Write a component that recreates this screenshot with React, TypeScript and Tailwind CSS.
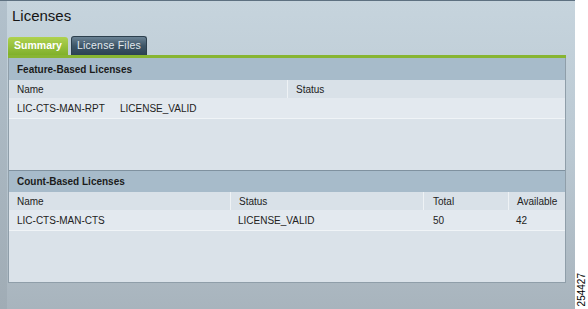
const featureRows = [{ name: 'LIC-CTS-MAN-RPT', status: 'LICENSE_VALID' }]

const countRows = [{ name: 'LIC-CTS-MAN-CTS', status: 'LICENSE_VALID', total: '50', available: '42' }]

function SectionHeader({ title, first }: { title: string; first?: boolean }) {
    return (
        <div
            className={`flex items-center pl-2 bg-[#a7bbca] text-[10px] font-bold text-[#1b1b1b] ${first ? 'h-[22px]' : 'h-[22px] border-t border-[#7f919f]'}`}
        >
            {title}
        </div>
    )
}

export default function App() {
    return (
        <div className="flex w-[588px] h-[309px] bg-white font-['Liberation_Sans',Arial,sans-serif] overflow-hidden">
            <div className="flex w-[575px] h-full border-t border-[#5e7181] bg-gradient-to-b from-[#c6d4dd] via-[#bac8d2] to-[#a8b4bd]">
                {/* left edge strip */}
                <div className="w-[7px] h-full bg-gradient-to-b from-[#b2c1cc] to-[#a0acb5]" />

                <div className="flex flex-col flex-1">
                    <h1 className="pt-[6px] pl-[5px] text-[15px] leading-[18px] text-[#151515]">Licenses</h1>

                    {/* Tabs */}
                    <div className="flex items-end gap-[3px] ml-px mt-[11px] h-[19px]">
                        <div className="flex items-center justify-center w-[60px] h-[18px] rounded-t-[3px] bg-gradient-to-b from-[#afd24f] to-[#80b02a] text-[10.5px] font-bold text-white">
                            Summary
                        </div>
                        <div className="flex items-center justify-center w-[76px] h-[19px] rounded-t-[3px] border border-b-0 border-[#2c3f4d] bg-gradient-to-b from-[#6a8294] via-[#3d5567] to-[#2c4253] text-[10.5px] tracking-[0.2px] text-[#e2e9ee]">
                            License Files
                        </div>
                    </div>
                    <div className="ml-px w-[558px] h-[3px] bg-[#88b532]" />

                    {/* Panel */}
                    <div className="ml-px w-[558px] border-x border-b border-[#8f9ea9] bg-[#dae2e9]">
                        {/* Feature-Based */}
                        <SectionHeader title="Feature-Based Licenses" first />
                        <div className="grid grid-cols-[278px_1fr] h-[18px] bg-[#d9e1e8] text-[10px] text-[#222]">
                            <div className="flex items-center pl-2">Name</div>
                            <div className="flex items-center pl-2 border-l border-[#eef2f5]">Status</div>
                        </div>
                        {featureRows.map((row, i) => (
                            <div
                                key={i}
                                className="grid grid-cols-[103px_1fr] h-[21px] bg-[#e3e9ef] border-b border-[#f0f4f7] text-[10px] text-[#222]"
                            >
                                <div className="flex items-center pl-2">{row.name}</div>
                                <div className="flex items-center pl-2">{row.status}</div>
                            </div>
                        ))}
                        <div className="h-[51px]" />

                        {/* Count-Based */}
                        <SectionHeader title="Count-Based Licenses" />
                        <div className="grid grid-cols-[221px_193px_85px_1fr] h-[18px] bg-[#d9e1e8] text-[10px] text-[#222]">
                            <div className="flex items-center pl-2">Name</div>
                            <div className="flex items-center pl-2 border-l border-[#eef2f5]">Status</div>
                            <div className="flex items-center pl-[9px] border-l border-[#eef2f5]">Total</div>
                            <div className="flex items-center pl-2 border-l border-[#eef2f5]">Available</div>
                        </div>
                        {countRows.map((row, i) => (
                            <div
                                key={i}
                                className="grid grid-cols-[221px_193px_85px_1fr] h-[21px] bg-[#e3e9ef] border-b border-[#f0f4f7] text-[10px] text-[#222]"
                            >
                                <div className="flex items-center pl-2">{row.name}</div>
                                <div className="flex items-center pl-2">{row.status}</div>
                                <div className="flex items-center pl-[10px]">{row.total}</div>
                                <div className="flex items-center pl-[8px]">{row.available}</div>
                            </div>
                        ))}
                        <div className="h-[51px]" />
                    </div>
                </div>
            </div>

            {/* figure number */}
            <div className="flex flex-1 items-end justify-center pb-[3px]">
                <span className="[writing-mode:vertical-rl] rotate-180 text-[10px] leading-[11px] text-black">254427</span>
            </div>
        </div>
    )
}
